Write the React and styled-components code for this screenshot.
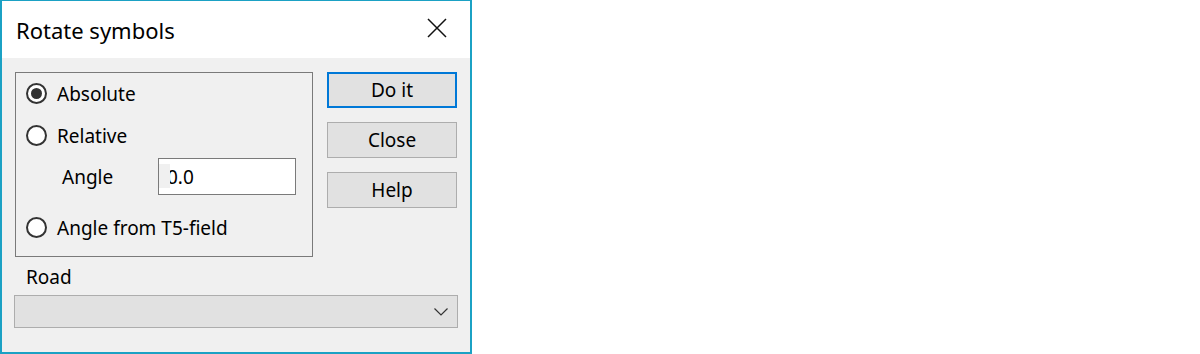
import React from "react";
import styled, { createGlobalStyle } from "styled-components";

const GlobalStyle = createGlobalStyle`
  html, body {
    margin: 0;
    padding: 0;
    background: #ffffff;
  }
  body {
    font-family: "Noto Sans", "Open Sans", "Liberation Sans", sans-serif;
    color: #000;
  }
`;

const Page = styled.div`
  width: 1200px;
  height: 354px;
  background: #fff;
`;

const Window = styled.div`
  width: 472px;
  height: 354px;
  box-sizing: border-box;
  border: 2px solid #1ba1c4;
  border-top-width: 1px;
  display: flex;
  flex-direction: column;
  background: #f0f0f0;
`;

const TitleBar = styled.div`
  height: 57px;
  flex-shrink: 0;
  background: #fff;
  display: flex;
  align-items: center;
  justify-content: space-between;
  padding: 0 14px 0 14px;
`;

const Title = styled.div`
  font-size: 22px;
`;

const CloseIcon = styled.svg`
  width: 20px;
  height: 20px;
  margin-right: 9px;
  margin-bottom: 3px;
`;

const Body = styled.div`
  flex: 1;
  padding: 14px 13px 0 12px;
`;

const TopRow = styled.div`
  display: flex;
  gap: 14px;
  margin-left: 1px;
`;

const GroupBox = styled.div`
  width: 298px;
  height: 185px;
  box-sizing: border-box;
  border: 1px solid #7a7a7a;
  display: flex;
  flex-direction: column;
  padding: 10px 0 0 10px;
`;

const RadioRow = styled.div`
  height: 21px;
  margin-top: ${(p) => p.top || 0}px;
  display: flex;
  align-items: center;
  gap: 10px;
  font-size: 19px;
`;

const RadioCircle = styled.span`
  width: 21px;
  height: 21px;
  flex-shrink: 0;
  box-sizing: border-box;
  border-radius: 50%;
  border: 2px solid #333;
  background: #fff;
  display: flex;
  align-items: center;
  justify-content: center;
  &::after {
    content: "";
    width: 11px;
    height: 11px;
    border-radius: 50%;
    background: ${(p) => (p.checked ? "#333" : "transparent")};
  }
`;

const AngleRow = styled.div`
  height: 37px;
  margin: 12px 0 22px;
  display: flex;
  align-items: center;
  padding-left: 36px;
  font-size: 19px;
`;

const AngleLabel = styled.span`
  width: 96px;
`;

const Input = styled.div`
  position: relative;
  width: 138px;
  height: 37px;
  box-sizing: border-box;
  border: 1px solid #7a7a7a;
  background: #fff;
  display: flex;
  align-items: center;
  padding-left: 8px;
  font-size: 19px;
  overflow: hidden;
`;

const Mask = styled.span`
  position: absolute;
  left: 0;
  top: 5px;
  width: 11px;
  height: 24px;
  background: #f0f0f0;
`;

const ButtonColumn = styled.div`
  display: flex;
  flex-direction: column;
  gap: 14px;
`;

const Button = styled.div`
  width: 130px;
  height: 36px;
  box-sizing: border-box;
  border: ${(p) => (p.primary ? "2px solid #0078d7" : "1px solid #adadad")};
  background: #e1e1e1;
  display: flex;
  align-items: center;
  justify-content: center;
  font-size: 19px;
  padding-bottom: 1px;
`;

const RoadLabel = styled.div`
  font-size: 19px;
  margin: 6px 0 0 12px;
  height: 28px;
  display: flex;
  align-items: center;
`;

const Combo = styled.div`
  margin-top: 4px;
  width: 444px;
  height: 33px;
  box-sizing: border-box;
  border: 1px solid #adadad;
  background: #e1e1e1;
  display: flex;
  align-items: center;
  justify-content: flex-end;
  padding-right: 9px;
`;

const Radio = ({ checked, label, top }) => (
  <RadioRow top={top}>
    <RadioCircle checked={checked} />
    <span>{label}</span>
  </RadioRow>
);

export default function App() {
  return (
    <Page>
      <GlobalStyle />
      <Window>
        <TitleBar>
          <Title>Rotate symbols</Title>
          <CloseIcon viewBox="0 0 20 20">
            <path d="M1 1 L19 19 M19 1 L1 19" stroke="#111" strokeWidth="1.5" fill="none" />
          </CloseIcon>
        </TitleBar>
        <Body>
          <TopRow>
            <GroupBox>
              <Radio checked label="Absolute" />
              <Radio label="Relative" top={21} />
              <AngleRow>
                <AngleLabel>Angle</AngleLabel>
                <Input>
                  <span>0.0</span>
                  <Mask />
                </Input>
              </AngleRow>
              <Radio label="Angle from T5-field" />
            </GroupBox>
            <ButtonColumn>
              <Button primary>Do it</Button>
              <Button>Close</Button>
              <Button>Help</Button>
            </ButtonColumn>
          </TopRow>
          <RoadLabel>Road</RoadLabel>
          <Combo>
            <svg width="14" height="8" viewBox="0 0 14 8">
              <path d="M0.5 0.5 L7 7 L13.5 0.5" stroke="#333" strokeWidth="1.2" fill="none" />
            </svg>
          </Combo>
        </Body>
      </Window>
    </Page>
  );
}
